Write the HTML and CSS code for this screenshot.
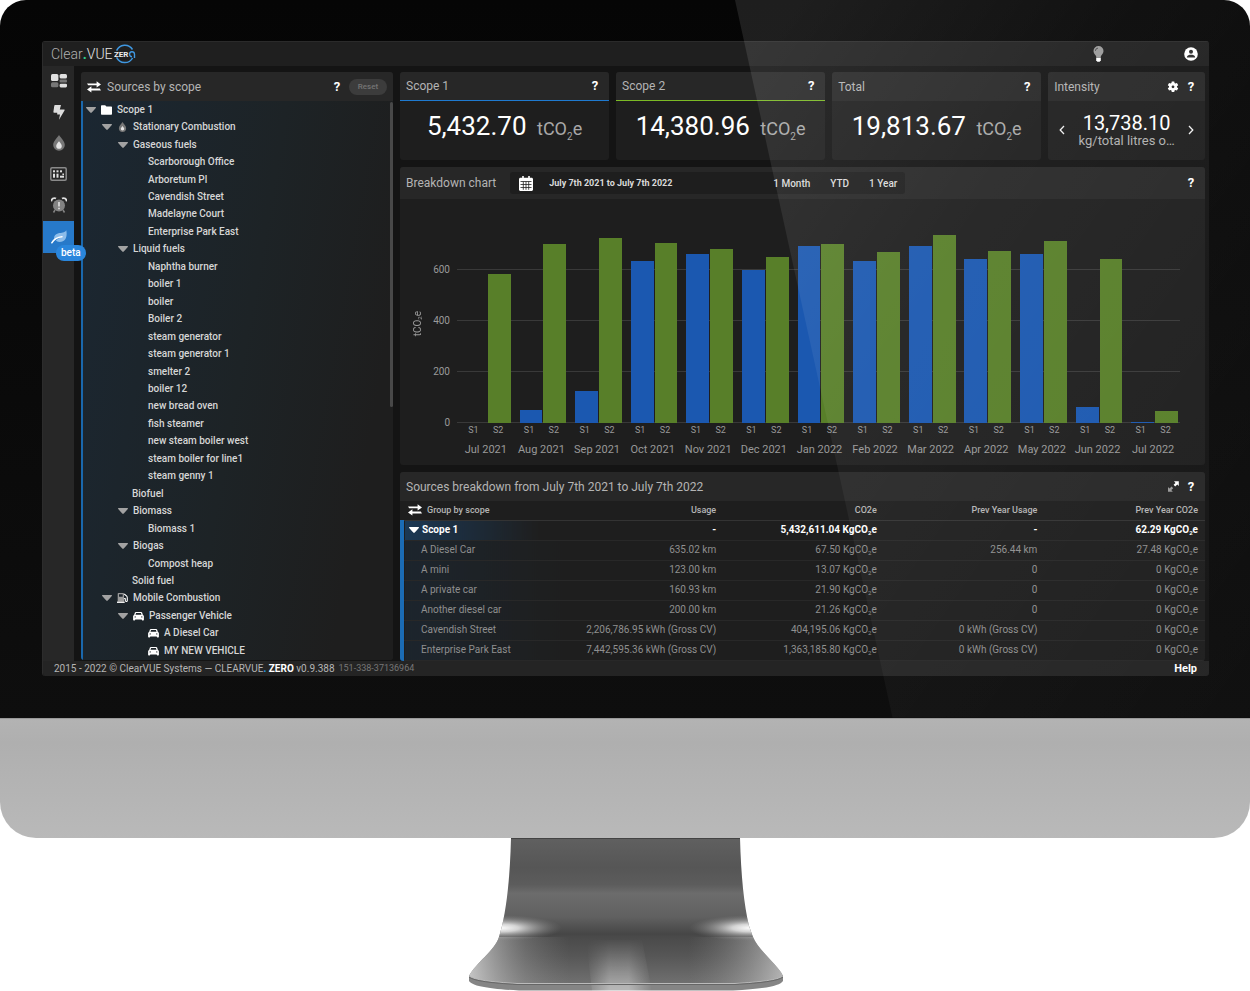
FILE: index.html
```html
<!DOCTYPE html>
<html lang="en">
<head>
<meta charset="utf-8">
<title>ClearVUE Zero</title>
<link rel="stylesheet" href="styles.css">
</head>
<body>
<svg class="defs" aria-hidden="true">
  <symbol id="tri" viewBox="0 0 10 6"><path d="M.6 0h8.8c.6 0 .8.6.4 1L5.8 5.400c-.5.6-1.100.6-1.600 0L.2 1C-.2.6 0 0 .6 0z"/></symbol>
  <symbol id="swap" viewBox="0 0 14 12"><path d="M0 2.400h9.600V.2L14 3.500 9.600 6.600V4.300H1.200zM14 9.400H4.400v2.200L0 8.400l4.400-3.200v2.300h8.400z"/></symbol>
  <symbol id="car" viewBox="0 0 12 10"><path d="M3.200.5h5.600c.6 0 .9.3 1.100.8l.9 2.500c.7.3 1.100.8 1.100 1.600V9c0 .5-.3.8-.8.8h-.8c-.5 0-.7-.3-.7-.8v-.3H2.400V9c0 .5-.3.8-.8.8H.9C.4 9.800.1 9.500.1 9V5.400c0-.8.4-1.300 1.100-1.600l.9-2.500C2.300.8 2.600.5 3.200.5zM3.400 1.700l-.7 2h6.600l-.7-2zM2.400 5.300a.7.7 0 1 0 0 1.400.7.7 0 0 0 0-1.400zm7.200 0a.7.7 0 1 0 0 1.400.7.7 0 0 0 0-1.400z" fill-rule="evenodd"/></symbol>
  <symbol id="drop" viewBox="0 0 12 16"><path d="M6 0c2 3 5.800 6.200 5.800 10A5.800 5.800 0 0 1 .2 10C.2 6.200 4 3 6 0z" fill="#777"/><path d="M6 6.200c1 1.500 2.800 2.900 2.800 4.700a2.800 2.800 0 0 1-5.600 0c0-1.800 1.800-3.200 2.800-4.700z" fill="#e4e4e4"/></symbol>
</svg>

<div class="monitor">
  <div class="bezel">
    <div class="app">
      <header class="topbar">
        <a class="brand" href="#" aria-label="Clear.VUE Zero">
          <span class="brand-name"><span class="brand-light">Clear</span><span class="brand-dot">.</span>VUE</span>
          <svg class="brand-zero" viewBox="0 0 22 20">
            <path d="M2.600 6.600A9 9 0 0 1 18.500 5.500M2.600 13.400a9 9 0 0 0 16 .6" fill="none" stroke="#3f97e0" stroke-width="1.500"/>
            <text x="0" y="13" class="zero-text">ZER</text>
            <path d="M20.500 14V10a2.500 2.500 0 1 0-2.500 2.700" fill="none" stroke="#3f97e0" stroke-width="1.400"/>
          </svg>
        </a>
        <div class="top-actions">
          <button class="icon-btn" aria-label="Tips"><svg width="11" height="16" viewBox="0 0 11 16"><path d="M5.500 0a5 5 0 0 1 5 5c0 2-1.200 3-2.200 4.500-.3.500-.5 1-.6 1.500H3.300c-.1-.5-.3-1-.6-1.500C1.700 8 .5 7 .5 5a5 5 0 0 1 5-5z" fill="#9a9a9a"/><path d="M2.400 4.800A2.800 2.800 0 0 1 5 2.100" fill="none" stroke="#444" stroke-width=".9"/><path d="M3.200 11.400h4.600v2.800l-1.100 1.600H4.300l-1.100-1.600z" fill="#fff"/></svg></button>
          <button class="icon-btn" aria-label="Account"><svg width="14" height="14" viewBox="0 0 14 14"><circle cx="7" cy="7" r="6.800" fill="#fff"/><circle cx="7" cy="4.800" r="2" fill="#2c2c2c"/><path d="M2.900 10c0-1.700 2.400-2.300 4.100-2.300s4.100.6 4.100 2.300v.6H2.900z" fill="#2c2c2c"/></svg></button>
        </div>
      </header>

      <div class="workspace">
        <nav class="rail">
          <a href="#" aria-label="Dashboard"><svg width="16" height="14" viewBox="0 0 16 14"><rect width="7.400" height="7" rx="1.500" fill="#e0e0e0"/><rect x="8.600" width="7.400" height="4.500" rx="1.500" fill="#e0e0e0"/><rect y="8.200" width="7.400" height="5" rx="1.500" fill="#777"/><rect x="8.600" y="5.500" width="7.400" height="3" rx="1" fill="#777"/><rect x="8.600" y="9.700" width="7.400" height="3.700" rx="1.300" fill="#e0e0e0"/></svg></a>
          <a href="#" aria-label="Electricity"><svg width="12" height="15" viewBox="0 0 12 15"><path d="M2 0h6l-1.200 4.600H11c.6 0 .8.500.5 1L6 14.700 7 9.500H4.200V7.700H1.100c-.5 0-.8-.3-.7-.9L1.300.8C1.400.3 1.600 0 2 0z" fill="#dcdcdc"/></svg></a>
          <a href="#" aria-label="Gas"><svg width="12" height="16"><use href="#drop"/></svg></a>
          <a href="#" aria-label="Calendar"><svg width="17" height="14" viewBox="0 0 17 14"><rect x=".8" y=".8" width="15.400" height="12.400" rx="1.200" fill="none" stroke="#8a8a8a" stroke-width="1.500"/><g fill="#e0e0e0"><rect x="3" y="3.300" width="2" height="2"/><rect x="6.500" y="3.300" width="2" height="2"/><rect x="10" y="3.300" width="2" height="2"/><rect x="3" y="6.700" width="2" height="4"/><rect x="6.500" y="6.700" width="2" height="4"/><rect x="12.400" y="6.500" width="1.600" height="1.600"/><rect x="10" y="8.700" width="4" height="2"/></g></svg></a>
          <a href="#" aria-label="Alarms"><svg width="16" height="16" viewBox="0 0 16 16"><circle cx="8" cy="8.500" r="6" fill="#828282"/><path d="M4 13l-1.500 2.500M12 13l1.500 2.500" stroke="#828282" stroke-width="1.500"/><path d="M.5 4.500A3 3 0 0 1 5 1.500M15.500 4.500A3 3 0 0 0 11 1.500" fill="none" stroke="#e0e0e0" stroke-width="1.800"/><path d="M8 5v4.500M8 10.800v1.400" stroke="#eee" stroke-width="1.400"/></svg></a>
          <a href="#" class="active" aria-label="Carbon, beta"><svg width="16" height="14" viewBox="0 0 16 14"><path d="M15.300.3C16.300 5.500 15.500 12 8.500 12c-1.700 0-2.700-.5-3.600-1.400C7 8.500 9 7.600 12 7 8.500 7 5.600 8 3.200 9.800 2.400 6.500 4.200 3.800 7.500 3.200c3-.5 6 0 7.800-2.900z" fill="#8dbdea"/><path d="M.8 12.800C2.800 9.500 6.500 7.200 11 6.800" fill="none" stroke="#fff" stroke-width="1.500" stroke-linecap="round"/></svg><span class="beta">beta</span></a>
        </nav>

        <section class="panel sources">
          <div class="panel-head">
            <svg class="swap" width="14" height="12"><use href="#swap"/></svg>
            <h2>Sources by scope</h2>
            <button class="help push" aria-label="Help">?</button>
            <button class="reset" disabled>Reset</button>
          </div>
          <ul class="tree">
            <li class="l0"><svg class="tri"><use href="#tri"/></svg><svg class="ic" viewBox="0 0 11 10"><path d="M1 .3h3.200l1.200 1.300H10c.6 0 1 .4 1 1v6.200c0 .6-.4 1-1 1H1c-.6 0-1-.4-1-1V1.300c0-.6.4-1 1-1z" fill="#fff"/></svg>Scope 1</li>
            <li class="l1"><svg class="tri"><use href="#tri"/></svg><svg class="ic"><use href="#drop"/></svg>Stationary Combustion</li>
            <li class="l2"><svg class="tri"><use href="#tri"/></svg>Gaseous fuels</li>
            <li class="l4">Scarborough Office</li>
            <li class="l4">Arboretum Pl</li>
            <li class="l4">Cavendish Street</li>
            <li class="l4">Madelayne Court</li>
            <li class="l4">Enterprise Park East</li>
            <li class="l2"><svg class="tri"><use href="#tri"/></svg>Liquid fuels</li>
            <li class="l4">Naphtha burner</li>
            <li class="l4">boiler 1</li>
            <li class="l4">boiler</li>
            <li class="l4">Boiler 2</li>
            <li class="l4">steam generator</li>
            <li class="l4">steam generator 1</li>
            <li class="l4">smelter 2</li>
            <li class="l4">boiler 12</li>
            <li class="l4">new bread oven</li>
            <li class="l4">fish steamer</li>
            <li class="l4">new steam boiler west</li>
            <li class="l4">steam boiler for line1</li>
            <li class="l4">steam genny 1</li>
            <li class="l3">Biofuel</li>
            <li class="l2"><svg class="tri"><use href="#tri"/></svg>Biomass</li>
            <li class="l4">Biomass 1</li>
            <li class="l2"><svg class="tri"><use href="#tri"/></svg>Biogas</li>
            <li class="l4">Compost heap</li>
            <li class="l3">Solid fuel</li>
            <li class="l1"><svg class="tri"><use href="#tri"/></svg><svg class="ic" viewBox="0 0 11 10"><path d="M1.500 0h4.700c.5 0 .8.300.8.800V8.500h.6V10H0V8.500h.7V.8c0-.5.300-.8.800-.8z" fill="#9a9a9a"/><path d="M2 1.200h3.700v2.600H2z" fill="#1d252c"/><path d="M0 9.300h7.600" stroke="#fff"/><path d="M7.200 1l2.500 2.200c.5.500.6 1 .6 1.700v2.700c0 1.300-2 1.200-2 0V5.800L7 5.500" fill="none" stroke="#fff" stroke-width="1.100"/></svg>Mobile Combustion</li>
            <li class="l2"><svg class="tri"><use href="#tri"/></svg><svg class="ic"><use href="#car"/></svg>Passenger Vehicle</li>
            <li class="l4"><svg class="ic"><use href="#car"/></svg>A Diesel Car</li>
            <li class="l4"><svg class="ic"><use href="#car"/></svg>MY NEW VEHICLE</li>
          </ul>
          <span class="scroll-thumb"></span>
        </section>

        <main class="board">
          <div class="cards">
            <section class="panel card blue">
              <div class="panel-head"><h2>Scope 1</h2><button class="help push" aria-label="Help">?</button></div>
              <p class="figure">5,432.70 <span class="unit">tCO<sub>2</sub>e</span></p>
            </section>
            <section class="panel card green">
              <div class="panel-head"><h2>Scope 2</h2><button class="help push" aria-label="Help">?</button></div>
              <p class="figure">14,380.96 <span class="unit">tCO<sub>2</sub>e</span></p>
            </section>
            <section class="panel card">
              <div class="panel-head"><h2>Total</h2><button class="help push" aria-label="Help">?</button></div>
              <p class="figure">19,813.67 <span class="unit">tCO<sub>2</sub>e</span></p>
            </section>
            <section class="panel card">
              <div class="panel-head"><h2>Intensity</h2>
                <button class="icon-btn push" aria-label="Settings"><svg width="12" height="12" viewBox="0 0 24 24"><path fill-rule="evenodd" d="M9.500 1h5l.6 3.200 1.700 1 3.100-1.100 2.500 4.300-2.500 2.100v2l2.500 2.100-2.500 4.300-3.100-1.100-1.700 1-.6 3.200h-5l-.6-3.200-1.700-1-3.100 1.100-2.500-4.300 2.500-2.100v-2L1.600 8.400l2.500-4.300 3.100 1.100 1.700-1zM12 8.800a2.800 2.800 0 1 0 0 5.600 2.800 2.800 0 0 0 0-5.600z" fill="#fff"/></svg></button>
                <button class="help" aria-label="Help">?</button></div>
              <div class="intensity">
                <button class="icon-btn" aria-label="Previous"><svg width="6" height="10" viewBox="0 0 6 10"><path d="M5 1L1.200 5 5 9" fill="none" stroke="#eee" stroke-width="1.300"/></svg></button>
                <p><strong>13,738.10</strong><span>kg/total litres o…</span></p>
                <button class="icon-btn" aria-label="Next"><svg width="6" height="10" viewBox="0 0 6 10"><path d="M1 1l3.800 4L1 9" fill="none" stroke="#eee" stroke-width="1.300"/></svg></button>
              </div>
            </section>
          </div>

          <section class="panel chart">
            <div class="panel-head">
              <h2>Breakdown chart</h2>
              <div class="range">
                <button class="dates"><svg width="14" height="15" viewBox="0 0 14 15"><path d="M1.500 1.800h1.700V0h1.600v1.800h4.400V0h1.600v1.800h1.700c.8 0 1.500.6 1.500 1.400v10.300c0 .8-.7 1.500-1.500 1.500h-11C.7 15 0 14.300 0 13.500V3.200c0-.8.7-1.400 1.500-1.400z" fill="#fff"/><path d="M1.500 5.500h11M1.500 8.500h11M1.500 11.500h11M4.300 5.500v8.300M7 5.500v8.300M9.700 5.500v8.300" stroke="#222" stroke-width=".8"/></svg>July 7th 2021 to July 7th 2022</button>
                <div class="presets"><button>1 Month</button><button>YTD</button><button>1 Year</button></div>
              </div>
              <button class="help push" aria-label="Help">?</button>
            </div>
            <div class="chart-body">
              <div class="axis-title"><span>tCO<sub>2</sub>e</span></div>
              <div class="plot">
                <div class="grid-lines">
                  <span style="bottom:68.500%"><b>600</b></span>
                  <span style="bottom:45.600%"><b>400</b></span>
                  <span style="bottom:22.700%"><b>200</b></span>
                  <span style="bottom:0%"><b>0</b></span>
                </div>
                <div class="bars">
                  <div><i style="height:0%"></i><i style="height:66.700%"></i></div>
                  <div><i style="height:5.600%"></i><i style="height:79.700%"></i></div>
                  <div><i style="height:14.300%"></i><i style="height:82.600%"></i></div>
                  <div><i style="height:72.300%"></i><i style="height:80.400%"></i></div>
                  <div><i style="height:75.400%"></i><i style="height:77.900%"></i></div>
                  <div><i style="height:68.500%"></i><i style="height:74.100%"></i></div>
                  <div><i style="height:79%"></i><i style="height:79.900%"></i></div>
                  <div><i style="height:72.300%"></i><i style="height:76.300%"></i></div>
                  <div><i style="height:79%"></i><i style="height:83.900%"></i></div>
                  <div><i style="height:73%"></i><i style="height:76.600%"></i></div>
                  <div><i style="height:75.400%"></i><i style="height:81.300%"></i></div>
                  <div><i style="height:7.100%"></i><i style="height:73.200%"></i></div>
                  <div><i style="height:.5%"></i><i style="height:5.400%"></i></div>
                </div>
              </div>
              <div class="labels">
                <div><small>S1</small><small>S2</small><span>Jul 2021</span></div>
                <div><small>S1</small><small>S2</small><span>Aug 2021</span></div>
                <div><small>S1</small><small>S2</small><span>Sep 2021</span></div>
                <div><small>S1</small><small>S2</small><span>Oct 2021</span></div>
                <div><small>S1</small><small>S2</small><span>Nov 2021</span></div>
                <div><small>S1</small><small>S2</small><span>Dec 2021</span></div>
                <div><small>S1</small><small>S2</small><span>Jan 2022</span></div>
                <div><small>S1</small><small>S2</small><span>Feb 2022</span></div>
                <div><small>S1</small><small>S2</small><span>Mar 2022</span></div>
                <div><small>S1</small><small>S2</small><span>Apr 2022</span></div>
                <div><small>S1</small><small>S2</small><span>May 2022</span></div>
                <div><small>S1</small><small>S2</small><span>Jun 2022</span></div>
                <div><small>S1</small><small>S2</small><span>Jul 2022</span></div>
              </div>
            </div>
          </section>

          <section class="panel breakdown">
            <div class="panel-head">
              <h2>Sources breakdown from July 7th 2021 to July 7th 2022</h2>
              <button class="icon-btn push" aria-label="Expand"><svg width="11" height="11" viewBox="0 0 11 11"><path d="M6 .3h4.800V5L9.300 3.600 7.200 5.500 5.600 3.800 7.500 1.900z" fill="#fff"/><path d="M0 6l1.500 1.400L3.600 5.500l1.600 1.700-1.900 1.900 1.500 1.600H0z" fill="#999"/></svg></button>
              <button class="help" aria-label="Help">?</button>
            </div>
            <table>
              <thead>
                <tr><th><div class="group"><svg width="14" height="12"><use href="#swap"/></svg>Group by scope</div></th><th>Usage</th><th>CO2e</th><th>Prev Year Usage</th><th>Prev Year CO2e</th></tr>
              </thead>
              <tbody>
                <tr class="scope"><td><div class="group"><svg class="tri"><use href="#tri"/></svg>Scope 1</div></td><td>-</td><td>5,432,611.04 KgCO<sub>2</sub>e</td><td>-</td><td>62.29 KgCO<sub>2</sub>e</td></tr>
                <tr><td>A Diesel Car</td><td>635.02 km</td><td>67.50 KgCO<sub>2</sub>e</td><td>256.44 km</td><td>27.48 KgCO<sub>2</sub>e</td></tr>
                <tr><td>A mini</td><td>123.00 km</td><td>13.07 KgCO<sub>2</sub>e</td><td>0</td><td>0 KgCO<sub>2</sub>e</td></tr>
                <tr><td>A private car</td><td>160.93 km</td><td>21.90 KgCO<sub>2</sub>e</td><td>0</td><td>0 KgCO<sub>2</sub>e</td></tr>
                <tr><td>Another diesel car</td><td>200.00 km</td><td>21.26 KgCO<sub>2</sub>e</td><td>0</td><td>0 KgCO<sub>2</sub>e</td></tr>
                <tr><td>Cavendish Street</td><td>2,206,786.95 kWh (Gross CV)</td><td>404,195.06 KgCO<sub>2</sub>e</td><td>0 kWh (Gross CV)</td><td>0 KgCO<sub>2</sub>e</td></tr>
                <tr><td>Enterprise Park East</td><td>7,442,595.36 kWh (Gross CV)</td><td>1,363,185.80 KgCO<sub>2</sub>e</td><td>0 kWh (Gross CV)</td><td>0 KgCO<sub>2</sub>e</td></tr>
              </tbody>
            </table>
          </section>
        </main>
      </div>

      <footer class="footer">
        <span class="legal">2015 - 2022 © ClearVUE Systems — CLEARVUE<b class="dot">.</b> <b>ZERO</b> v0.9.388</span>
        <span class="build">151-338-37136964</span>
        <a href="#" class="push">Help</a>
      </footer>
    </div>
    <div class="glare"></div>
  </div>
  <div class="chin"></div>
</div>

<svg class="stand" viewBox="465 838 320 153" aria-hidden="true">
  <defs>
    <linearGradient id="neck" x1="0" y1="0" x2="0" y2="1"><stop offset="0" stop-color="#606060"/><stop offset=".3" stop-color="#565656"/><stop offset=".47" stop-color="#5c5c5c"/><stop offset=".56" stop-color="#6c6c6c"/><stop offset=".8" stop-color="#606060"/><stop offset=".97" stop-color="#464646"/><stop offset="1" stop-color="#4a4a4a"/></linearGradient>
    <linearGradient id="base" x1="0" y1="0" x2="0" y2="1"><stop offset="0" stop-color="#4a4a4a"/><stop offset=".4" stop-color="#565656"/><stop offset="1" stop-color="#707070"/></linearGradient>
    <linearGradient id="sides" x1="0" x2="1"><stop offset="0" stop-color="#ddd" stop-opacity=".8"/><stop offset=".18" stop-color="#aaa" stop-opacity=".3"/><stop offset=".32" stop-color="#888" stop-opacity="0"/><stop offset=".7" stop-color="#888" stop-opacity="0"/><stop offset="1" stop-color="#ddd" stop-opacity=".65"/></linearGradient>
    <linearGradient id="mid" x1="0" x2="1"><stop offset="0" stop-color="#fff" stop-opacity="0"/><stop offset=".35" stop-color="#fff" stop-opacity=".42"/><stop offset=".65" stop-color="#fff" stop-opacity=".42"/><stop offset="1" stop-color="#fff" stop-opacity="0"/></linearGradient>
    <linearGradient id="fade" x1="0" y1="0" x2="0" y2="1"><stop offset="0" stop-color="#000"/><stop offset="1" stop-color="#fff"/></linearGradient>
    <mask id="fadeMask" maskUnits="userSpaceOnUse" x="580" y="938" width="80" height="53"><rect x="580" y="938" width="80" height="53" fill="url(#fade)"/></mask>
    <radialGradient id="hot"><stop offset="0" stop-color="#fff"/><stop offset=".3" stop-color="#f4f4f4" stop-opacity=".8"/><stop offset="1" stop-color="#888" stop-opacity="0"/></radialGradient>
    <clipPath id="body"><path d="M511 838H740C741 876 744 905 749 926L753 937C758 950 779 966 783 976H469C475 964 495 950 499 937L502 926C507 905 510 876 511 838z"/></clipPath>
  </defs>
  <path d="M469 975v6c3 5 20 8 50 9.500h214c30-1.500 47-4.500 50-9.500v-6z" fill="#858585"/>
  <path d="M511 838H740C741 876 744 905 749 926L753 937H499L502 926C507 905 510 876 511 838z" fill="url(#neck)"/>
  <path d="M499 937H753C758 950 779 966 783 976C778 980 760 982 735 983.500H517C492 982 474 980 469 976C475 964 495 950 499 937z" fill="url(#base)"/>
  <path d="M499 937H753C758 950 779 966 783 976C778 980 760 982 735 983.500H517C492 982 474 980 469 976C475 964 495 950 499 937z" fill="url(#sides)"/>
  <path d="M586 940H642L652 991H592z" fill="url(#mid)" mask="url(#fadeMask)"/>
  <g clip-path="url(#body)"><ellipse cx="500" cy="928" rx="62" ry="13" fill="url(#hot)"/><ellipse cx="751" cy="928" rx="62" ry="13" fill="url(#hot)"/></g>
  <path d="M469 976c5 4 23 6 48 7.500h218c25-1.500 43-3.500 48-7.500" fill="none" stroke="#bbb"/>
  <path d="M469 977c5 4 23 6 48 7.500h218c25-1.500 43-3.500 48-7.500" fill="none" stroke="#666"/>
  <path d="M511 838.500h229" stroke="#444"/>
</svg>
</body>
</html>
```
FILE: styles.css
```css
* { box-sizing: border-box; }
body { margin: 0; background: #fff; font-family: Roboto, "Liberation Sans", sans-serif; color: #ddd; overflow-x: hidden; }
h2, p, ul { margin: 0; padding: 0; font-weight: 400; }
button { font: inherit; color: inherit; background: none; border: 0; padding: 0; }
a { color: inherit; text-decoration: none; }
svg { display: block; flex: none; }
.defs { position: absolute; width: 0; height: 0; }
.push { margin-left: auto; }

/* Monitor */
.bezel { position: relative; padding: 41px 41px 42px 42px; background: linear-gradient(#050505, #0e0e0e); border-radius: 26px 26px 0 0; overflow: hidden; }
.chin { height: 120px; background: linear-gradient(#b3b3b3, #afafaf 20%, #b9b9b9); border-top: 1px solid #999; border-radius: 0 0 36px 36px; }
.glare { position: absolute; inset: 0; pointer-events: none; clip-path: polygon(58.800% 0, 100% 0, 100% 100%, 71.400% 100%); background: linear-gradient(125deg, rgba(255,255,255,.1) 45%, rgba(255,255,255,.05) 64%, rgba(255,255,255,.03) 80%, rgba(255,255,255,.01)); }
.stand { width: 320px; height: 153px; margin: 0 auto; }

/* Application frame */
.app { background: #141414; border-radius: 3px; border-left: 1px solid #2c2c2c; overflow: hidden; }
.topbar { display: flex; align-items: center; justify-content: space-between; height: 25px; padding: 0 11px 0 8px; background: #1f1f1f; border-top: 1px solid #2a2a2a; }
.brand { display: flex; align-items: center; gap: 1px; }
.brand-name { font-size: 14px; line-height: 20px; color: #e4e4e4; font-weight: 300; }
.brand-light { color: #b0b0b0; }
.brand-dot { color: #2ecc8f; font-weight: 700; }
.brand-zero { width: 22px; height: 20px; }
.zero-text { font-size: 8px; font-weight: 700; fill: #eee; }
.top-actions { display: flex; align-items: center; gap: 80px; }
.workspace { display: flex; padding-right: 4px; }
.icon-btn { display: block; }

.rail { width: 31px; background: #272727; flex: none; }
.rail a { position: relative; display: flex; align-items: center; justify-content: center; height: 31px; padding-bottom: 1px; }
.rail .active { background: #2779c9; height: 32px; }
.beta { position: absolute; left: 13px; top: 24px; z-index: 2; height: 16px; padding: 0 5px; border-radius: 8px; background: #2a86dc; color: #fff; font-size: 10px; font-weight: 500; line-height: 16px; }

.panel { background: #1e1e1e; border-radius: 3px; overflow: hidden; }
.panel-head { display: flex; align-items: center; height: 29px; padding: 0 8px 0 6px; background: #272727; gap: 6px; }
.panel-head h2 { font-size: 12px; color: #b4b4b4; white-space: nowrap; }
.help { width: 12px; font-size: 13px; font-weight: 700; color: #fff; line-height: 20px; text-align: center; }

/* Source tree */
.sources { position: relative; display: flex; flex-direction: column; flex: 312 1 0; margin: 6px 0 1px 7px; }
.sources .panel-head { padding-right: 6px; }
.swap { fill: #fff; }
.reset { width: 38px; height: 16px; border-radius: 8px; background: #3c3c3c; color: #757575; font-size: 8px; font-weight: 500; }
.tree { flex: 1; display: grid; grid-auto-rows: 1fr; list-style: none; border-left: 2px solid #1a68ad; background: linear-gradient(100deg, #1b2732, #1d2326 50%, #1e1e1e 85%); font-size: 10px; line-height: 14px; font-weight: 500; color: #d6d6d6; }
.tree li { display: flex; align-items: center; gap: 5px; white-space: nowrap; }
.tri { width: 10px; height: 6px; fill: #a2a2a2; }
.ic { width: 11px; height: 10px; fill: #fff; }
.l0 { padding-left: 3px; }
.l1 { padding-left: 19px; }
.l2 { padding-left: 35px; }
.l3 { padding-left: 49px; }
.l4 { padding-left: 65px; }
.scroll-thumb { position: absolute; right: 0; top: 30px; width: 3px; height: 305px; border-radius: 2px; background: #484848; }

/* Right side */
.board { flex: 805 1 0; min-width: 0; display: flex; flex-direction: column; gap: 7px; margin: 6px 0 0 7px; }
.cards { display: grid; grid-template-columns: 4fr 4fr 4fr 3fr; gap: 7px; }
.card { height: 88px; }
.blue .panel-head { border-bottom: 1px solid #1f7ad0; }
.green .panel-head { border-bottom: 1px solid #7cba25; }
.figure { padding-top: 9px; text-align: center; font-size: 26px; line-height: 32px; color: #fff; }
.unit { margin-left: 4px; font-size: 18px; color: #a8a8a8; }
sub { line-height: 0; font-size: 10px; vertical-align: -5px; }
.intensity { display: flex; align-items: center; justify-content: space-between; padding: 11px 11px 0; }
.intensity p { text-align: center; }
.intensity strong { display: block; font-size: 20px; font-weight: 400; line-height: 22px; color: #fff; }
.intensity span { display: block; font-size: 13px; line-height: 14px; color: #b0b0b0; }

/* Chart */
.chart .panel-head { height: 32px; }
.range { display: flex; height: 22px; margin-left: 8px; border-radius: 3px; background: #1e1e1e; font-size: 9px; font-weight: 700; color: #dadada; }
.dates { display: flex; align-items: center; gap: 16px; width: 255px; padding-left: 9px; }
.presets { display: flex; gap: 20px; padding: 0 8px; font-size: 10px; font-weight: 500; }
.chart-body { display: grid; grid-template-columns: 57px 1fr; grid-template-rows: 224px auto; padding-right: 25px; height: 266px; }
.axis-title { display: flex; align-items: center; padding: 26px 0 0 12px; font-size: 10px; color: #9a9a9a; }
.axis-title span { writing-mode: vertical-rl; transform: rotate(180deg); }
.axis-title sub { font-size: 6px; vertical-align: -2px; }
.plot { position: relative; }
.grid-lines span { position: absolute; left: 0; right: 0; border-bottom: 1px solid #393939; }
.grid-lines b { position: absolute; right: 100%; bottom: -7px; margin-right: 7px; font-size: 10px; line-height: 12px; font-weight: 400; color: #9a9a9a; }
.bars { position: relative; display: flex; height: 100%; }
.bars div { flex: 1; display: flex; align-items: flex-end; gap: 1px; padding: 0 2px 0 7px; }
.bars i { flex: 1; background: #1b58b0; }
.bars i + i { background: #587f29; }
.labels { grid-column: 2; display: flex; color: #999; text-align: center; }
.labels div { flex: 1; display: grid; grid-template-columns: 1fr 1fr; align-content: start; padding: 0 2px 0 4px; }
.labels small { font-size: 9px; line-height: 15px; }
.labels span { grid-column: 1 / 3; justify-self: center; padding-top: 4px; font-size: 11px; line-height: 15px; white-space: nowrap; }

/* Breakdown table */
table { width: 100%; border-collapse: collapse; table-layout: fixed; font-size: 10px; color: #8f8f8f; }
th, td { height: 20px; padding: 0 7px 0 0; text-align: right; white-space: nowrap; border-bottom: 1px solid #282828; line-height: 12px; }
th { height: 19px; font-size: 9px; font-weight: 500; color: #b5b5b5; border-color: #333; }
th:first-child { text-align: left; padding-left: 6px; }
td:first-child { text-align: left; padding-left: 17px; border-left: 4px solid #1b6cb5; background: linear-gradient(90deg, #1c252d, #1e1e1e); }
td sub { font-size: 6px; vertical-align: -2px; }
.group { display: flex; align-items: center; gap: 5px; fill: #fff; }
.scope { font-weight: 700; color: #fff; }
.scope td:first-child { padding-left: 5px; background: linear-gradient(90deg, #1b3854, #1e1e1e 85%); }
.scope .group { gap: 3px; }
.scope .tri { fill: #fff; }

.footer { display: flex; align-items: center; height: 15px; gap: 4px; padding: 0 12px 0 11px; background: #242424; font-size: 9px; color: #b5b5b5; }
.footer .legal { font-size: 10px; }
.footer b { color: #fff; }
.footer .dot { color: #1ea0f0; }
.footer .build { color: #777; }
.footer a { color: #fff; font-size: 11px; font-weight: 700; }
```
